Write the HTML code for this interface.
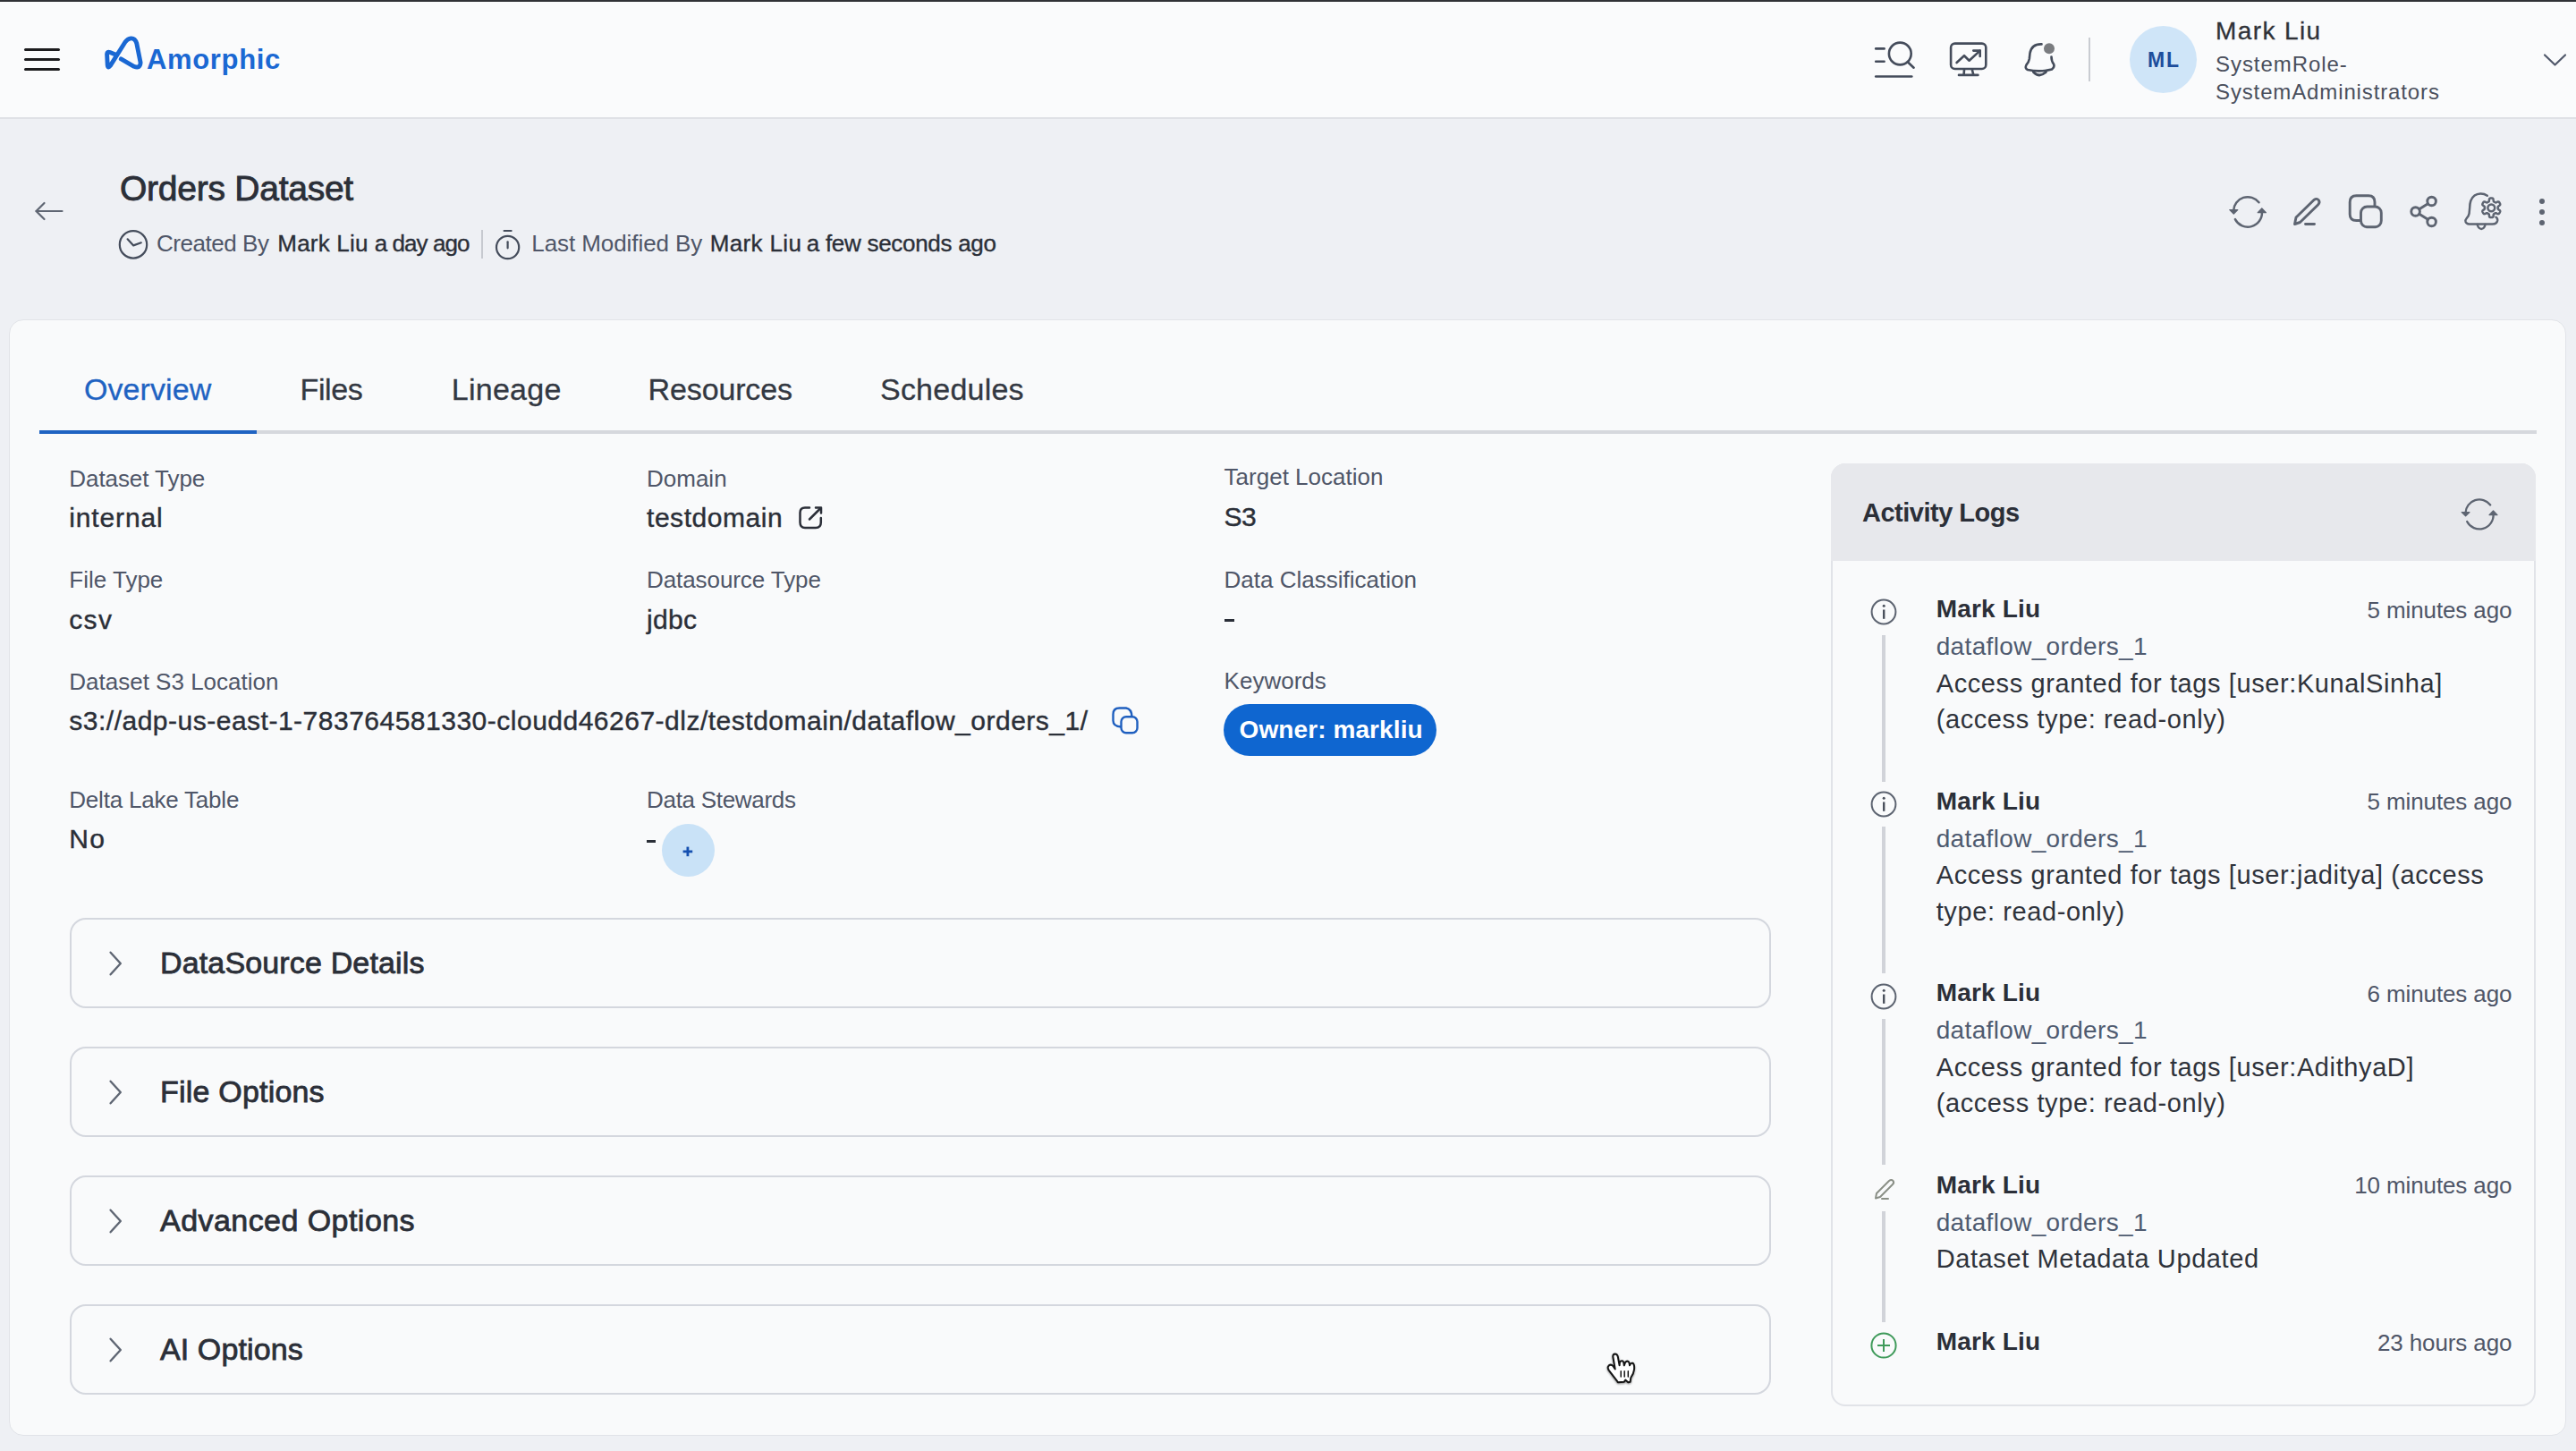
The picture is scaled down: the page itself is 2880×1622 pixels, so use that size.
<!DOCTYPE html>
<html><head><meta charset="utf-8"><style>
html,body{margin:0;padding:0;}
body{width:2880px;height:1622px;position:relative;overflow:hidden;background:#eef0f4;font-family:"Liberation Sans", sans-serif;}
.t{position:absolute;white-space:nowrap;line-height:1;}
svg{overflow:visible}
</style></head><body>
<div style="position:absolute;left:0px;top:0px;width:2880px;height:131px;background:#fafbfc;"></div>
<div style="position:absolute;left:0px;top:0px;width:2880px;height:2px;background:#303236;"></div>
<div style="position:absolute;left:0px;top:131px;width:2880px;height:2px;background:#dfe1e6;"></div>
<div style="position:absolute;left:26.5px;top:53.8px;width:40px;height:3.4px;background:#1c1c1e;border-radius:2px;"></div>
<div style="position:absolute;left:26.5px;top:64.8px;width:40px;height:3.4px;background:#1c1c1e;border-radius:2px;"></div>
<div style="position:absolute;left:26.5px;top:75.8px;width:40px;height:3.4px;background:#1c1c1e;border-radius:2px;"></div>
<svg style="position:absolute;left:110px;top:36px;" width="56" height="48" viewBox="110 36 56 48" fill="none"><path d="M135.3 65.9 L149.8 74.3 Q156.8 77 157.1 70 L152.8 48.5 Q151 42.6 146.4 42.9 Q142.6 43.2 139.8 47.2 L123.2 73.6 Q120.6 77 120.2 72.5 L119.6 60.5 Q119.8 57.3 123 58.6 L130.2 61.6" stroke="#1a68d3" stroke-width="4.9" stroke-linecap="round" stroke-linejoin="round"/></svg>
<div class="t" style="top:50.76px;font-size:31px;color:#1a68d3;left:164.00px;font-weight:bold;letter-spacing:0.65px;">Amorphic</div>
<svg style="position:absolute;left:2090px;top:40px;" width="56" height="52" viewBox="2090 40 56 52" fill="none"><g stroke="#444c5b" stroke-width="2.6" stroke-linecap="round">
<line x1="2097.2" y1="54.4" x2="2106.6" y2="54.4"/><line x1="2097.2" y1="68.7" x2="2106.6" y2="68.7"/>
<line x1="2097.2" y1="85.5" x2="2137.3" y2="85.5"/>
<circle cx="2124.3" cy="60" r="12.4"/><line x1="2133.6" y1="70" x2="2139.6" y2="75.7"/></g></svg>
<svg style="position:absolute;left:2175px;top:44px;" width="52" height="46" viewBox="2175 44 52 46" fill="none"><g stroke="#444c5b" stroke-width="2.6" stroke-linecap="round" stroke-linejoin="round">
<rect x="2181.1" y="48.6" width="39.2" height="28.4" rx="4.5"/>
<polyline points="2187.6,70 2196,62.2 2201.6,67.7 2213.7,56.6"/>
<polyline points="2206.3,56.6 2213.7,56.6 2213.7,63"/>
<line x1="2196" y1="78" x2="2195.6" y2="83.6"/><line x1="2204.9" y1="78" x2="2206.3" y2="83.6"/>
<line x1="2190" y1="83.9" x2="2211.4" y2="83.9"/></g></svg>
<svg style="position:absolute;left:2255px;top:40px;" width="52" height="52" viewBox="2255 40 52 52" fill="none"><g stroke="#444c5b" stroke-width="2.6" stroke-linecap="round" stroke-linejoin="round">
<path d="M2282.5 49.4 Q2271.5 49 2269.5 59.5 L2268.8 66 Q2268 70 2265.5 72.5 Q2263.5 76.5 2267 78 Q2280 81 2294 77.5 Q2297.5 75.5 2296 71.5 Q2293.5 68.5 2293.5 63.5"/>
<path d="M2273.3 80.5 Q2280 87.5 2287.5 80.5"/></g>
<circle cx="2291" cy="54.2" r="6" fill="#7a7c80"/></svg>
<div style="position:absolute;left:2334.5px;top:42px;width:2px;height:49px;background:#c9ccd2;"></div>
<div style="position:absolute;left:2381px;top:29px;width:75px;height:75px;background:#cfe5f8;border-radius:50%;"></div>
<div class="t" style="top:56.13px;font-size:23px;color:#1d4d9c;left:2401.00px;font-weight:bold;letter-spacing:1.84px;">ML</div>
<div class="t" style="top:21.30px;font-size:28px;color:#2f3238;left:2477.00px;letter-spacing:1.40px;-webkit-text-stroke:0.3px #2f3238;">Mark Liu</div>
<div class="t" style="top:59.68px;font-size:24px;color:#4a4f5c;left:2477.00px;letter-spacing:0.95px;">SystemRole-</div>
<div class="t" style="top:90.68px;font-size:24px;color:#4a4f5c;left:2477.00px;letter-spacing:0.87px;">SystemAdministrators</div>
<svg style="position:absolute;left:2840px;top:55px;" width="34" height="24" viewBox="2840 55 34 24" fill="none"><polyline points="2845,61.5 2856.5,72.5 2868,61.5" stroke="#50586a" stroke-width="2.2" stroke-linecap="round" stroke-linejoin="round"/></svg>
<svg style="position:absolute;left:36px;top:222px;" width="40" height="28" viewBox="36 222 40 28" fill="none"><g stroke="#5f6673" stroke-width="2.2" stroke-linecap="round" stroke-linejoin="round"><line x1="40.5" y1="236" x2="69.5" y2="236"/><polyline points="49.5,227 40.5,236 49.5,245"/></g></svg>
<div class="t" style="top:190.99px;font-size:39px;color:#2b2f38;left:134.00px;letter-spacing:-0.25px;-webkit-text-stroke:0.85px #2b2f38;">Orders Dataset</div>
<svg style="position:absolute;left:130px;top:254px;" width="38" height="38" viewBox="130 254 38 38" fill="none"><g stroke="#444c5b" stroke-width="2.2" stroke-linecap="round" stroke-linejoin="round"><circle cx="149" cy="273.4" r="15.2"/><polyline points="142.6,267.3 149.2,274.4 157.8,271.3"/></g></svg>
<div class="t" style="top:259.39px;font-size:26px;color:#4f5668;left:175.00px;letter-spacing:-0.45px;">Created By</div>
<div class="t" style="top:259.39px;font-size:26px;color:#2b2f38;left:310.30px;letter-spacing:0.21px;-webkit-text-stroke:0.35px #2b2f38;">Mark Liu</div>
<div class="t" style="top:259.39px;font-size:26px;color:#2b2f38;left:418.70px;letter-spacing:-0.93px;-webkit-text-stroke:0.35px #2b2f38;">a day ago</div>
<div style="position:absolute;left:537.5px;top:257.4px;width:2px;height:32px;background:#c6c9cf;"></div>
<svg style="position:absolute;left:550px;top:252px;" width="36" height="40" viewBox="550 252 36 40" fill="none"><g stroke="#444c5b" stroke-width="2.2" stroke-linecap="round"><circle cx="567.6" cy="276.5" r="12.6"/><line x1="563.6" y1="258" x2="571.6" y2="258"/><line x1="567.6" y1="270.3" x2="567.6" y2="277.3"/></g></svg>
<div class="t" style="top:259.39px;font-size:26px;color:#4f5668;left:594.30px;letter-spacing:-0.08px;">Last Modified By</div>
<div class="t" style="top:259.39px;font-size:26px;color:#2b2f38;left:793.80px;letter-spacing:0.34px;-webkit-text-stroke:0.35px #2b2f38;">Mark Liu</div>
<div class="t" style="top:259.39px;font-size:26px;color:#2b2f38;left:901.80px;letter-spacing:-0.29px;-webkit-text-stroke:0.35px #2b2f38;">a few seconds ago</div>
<svg style="position:absolute;left:2489.1px;top:214.2px;" width="48" height="44" viewBox="2489.1 214.2 48 44" fill="none"><g transform="translate(2513.1 236.2) scale(1.06)">
<path d="M-15 -0.5 A15 15 0 0 1 11.8 -9.2" stroke="#5d6471" stroke-width="2.3584905660377355" stroke-linecap="round" fill="none"/>
<path d="M-13.3 8.6 A15 15 0 0 0 15 0.8" stroke="#5d6471" stroke-width="2.3584905660377355" stroke-linecap="round" fill="none"/>
<polygon points="-19,-1.4 -10.6,-1.4 -14.8,2.8" fill="#5d6471" stroke="#5d6471" stroke-width="1.2" stroke-linejoin="round"/>
<polygon points="10.6,1.6 19.2,1.6 14.9,-3.0" fill="#5d6471" stroke="#5d6471" stroke-width="1.2" stroke-linejoin="round"/>
</g></svg>
<svg style="position:absolute;left:2558px;top:215px;" width="42" height="42" viewBox="2558 215 42 42" fill="none"><g stroke="#5d6471" stroke-width="2.9" stroke-linecap="round" stroke-linejoin="round">
<path d="M2565.5 250.5 L2567 243 L2587 223.5 Q2590.5 221 2592.5 224 Q2594 226.5 2591.5 229 L2571.5 248.5 Z"/>
<line x1="2577.5" y1="250.5" x2="2587.5" y2="250.5"/></g></svg>
<svg style="position:absolute;left:2620px;top:212px;" width="50" height="48" viewBox="2620 212 50 48" fill="none"><g stroke="#5d6471" stroke-width="2.9" stroke-linejoin="round">
<path d="M2655 231 L2655 226 Q2655 218.8 2648 218.8 L2634.5 218.8 Q2627.2 218.8 2627.2 226 L2627.2 239.5 Q2627.2 246.5 2634.5 246.5 L2639.5 246.5"/>
<rect x="2639.5" y="231" width="22.8" height="22.8" rx="7"/></g></svg>
<svg style="position:absolute;left:2690px;top:214px;" width="40" height="44" viewBox="2690 214 40 44" fill="none"><g stroke="#5d6471" stroke-width="2.9" stroke-linecap="round">
<circle cx="2718.6" cy="225" r="4.8"/><circle cx="2700.6" cy="236.5" r="4.8"/><circle cx="2718.6" cy="248" r="4.8"/>
<line x1="2704.8" y1="233.8" x2="2714.4" y2="227.7"/><line x1="2704.8" y1="239.2" x2="2714.4" y2="245.3"/></g></svg>
<svg style="position:absolute;left:2750px;top:210px;" width="54" height="52" viewBox="2750 210 54 52" fill="none"><g stroke="#5d6471" stroke-width="2.5" stroke-linecap="round" stroke-linejoin="round" fill="none">
<path d="M2780.8 218.8 Q2777.5 216.5 2773.1 216.6 Q2765.5 216.8 2762.3 224.5 Q2761.3 227.5 2761.2 232 L2760.6 238.5 Q2760 242 2757.7 244 Q2755.8 246 2756.6 248 Q2757.6 250.3 2760.5 250.4 L2786.6 250.5 Q2791.5 250.4 2792.2 246.5 Q2792.5 244 2790.5 242.7"/>
<path d="M2769.6 251 Q2771 255.8 2774.2 255.9 Q2777.4 255.8 2778.6 251"/>
<path d="M2785.30,221.50 L2785.68,221.51 L2786.05,221.54 L2786.43,221.60 L2786.79,221.70 L2787.13,221.90 L2787.42,222.31 L2787.61,223.04 L2787.69,223.98 L2787.77,224.71 L2787.91,225.12 L2788.11,225.35 L2788.32,225.51 L2788.55,225.64 L2788.78,225.76 L2789.00,225.89 L2789.22,226.02 L2789.44,226.15 L2789.67,226.28 L2789.91,226.39 L2790.21,226.45 L2790.64,226.37 L2791.32,226.07 L2792.16,225.67 L2792.89,225.46 L2793.39,225.51 L2793.74,225.71 L2794.01,225.97 L2794.24,226.27 L2794.46,226.58 L2794.65,226.90 L2794.83,227.23 L2795.00,227.57 L2795.13,227.92 L2795.23,228.29 L2795.22,228.69 L2795.02,229.14 L2794.47,229.67 L2793.70,230.21 L2793.11,230.64 L2792.82,230.97 L2792.72,231.26 L2792.70,231.52 L2792.69,231.78 L2792.70,232.04 L2792.70,232.30 L2792.70,232.56 L2792.69,232.82 L2792.70,233.08 L2792.72,233.34 L2792.82,233.63 L2793.11,233.96 L2793.70,234.39 L2794.47,234.93 L2795.02,235.46 L2795.22,235.91 L2795.23,236.31 L2795.13,236.68 L2795.00,237.03 L2794.83,237.37 L2794.65,237.70 L2794.46,238.02 L2794.24,238.33 L2794.01,238.63 L2793.74,238.89 L2793.39,239.09 L2792.89,239.14 L2792.16,238.93 L2791.32,238.53 L2790.64,238.23 L2790.21,238.15 L2789.91,238.21 L2789.67,238.32 L2789.44,238.45 L2789.22,238.58 L2789.00,238.71 L2788.78,238.84 L2788.55,238.96 L2788.32,239.09 L2788.11,239.25 L2787.91,239.48 L2787.77,239.89 L2787.69,240.62 L2787.61,241.56 L2787.42,242.29 L2787.13,242.70 L2786.79,242.90 L2786.43,243.00 L2786.05,243.06 L2785.68,243.09 L2785.30,243.10 L2784.92,243.09 L2784.55,243.06 L2784.17,243.00 L2783.81,242.90 L2783.47,242.70 L2783.18,242.29 L2782.99,241.56 L2782.91,240.62 L2782.83,239.89 L2782.69,239.48 L2782.49,239.25 L2782.28,239.09 L2782.05,238.96 L2781.82,238.84 L2781.60,238.71 L2781.38,238.58 L2781.16,238.45 L2780.93,238.32 L2780.69,238.21 L2780.39,238.15 L2779.96,238.23 L2779.28,238.53 L2778.44,238.93 L2777.71,239.14 L2777.21,239.09 L2776.86,238.89 L2776.59,238.63 L2776.36,238.33 L2776.14,238.02 L2775.95,237.70 L2775.77,237.37 L2775.60,237.03 L2775.47,236.68 L2775.37,236.31 L2775.38,235.91 L2775.58,235.46 L2776.13,234.93 L2776.90,234.39 L2777.49,233.96 L2777.78,233.63 L2777.88,233.34 L2777.90,233.08 L2777.91,232.82 L2777.90,232.56 L2777.90,232.30 L2777.90,232.04 L2777.91,231.78 L2777.90,231.52 L2777.88,231.26 L2777.78,230.97 L2777.49,230.64 L2776.90,230.21 L2776.13,229.67 L2775.58,229.14 L2775.38,228.69 L2775.37,228.29 L2775.47,227.92 L2775.60,227.57 L2775.77,227.23 L2775.95,226.90 L2776.14,226.58 L2776.36,226.27 L2776.59,225.97 L2776.86,225.71 L2777.21,225.51 L2777.71,225.46 L2778.44,225.67 L2779.28,226.07 L2779.96,226.37 L2780.39,226.45 L2780.69,226.39 L2780.93,226.28 L2781.16,226.15 L2781.38,226.02 L2781.60,225.89 L2781.82,225.76 L2782.05,225.64 L2782.28,225.51 L2782.49,225.35 L2782.69,225.12 L2782.83,224.71 L2782.91,223.98 L2782.99,223.04 L2783.18,222.31 L2783.47,221.90 L2783.81,221.70 L2784.17,221.60 L2784.55,221.54 L2784.92,221.51 Z"/>
<circle cx="2785.3" cy="232.3" r="3.9"/></g></svg>
<div style="position:absolute;left:2839.2px;top:222.3px;width:6px;height:6px;background:#5d6471;border-radius:50%;"></div>
<div style="position:absolute;left:2839.2px;top:234.2px;width:6px;height:6px;background:#5d6471;border-radius:50%;"></div>
<div style="position:absolute;left:2839.2px;top:246.2px;width:6px;height:6px;background:#5d6471;border-radius:50%;"></div>
<div style="position:absolute;left:10px;top:357px;width:2859px;height:1248px;background:#f9fafb;border:1.5px solid #e1e3e8;border-radius:16px;box-sizing:border-box;"></div>
<div style="position:absolute;left:44px;top:481px;width:2792px;height:4px;background:#d6d8dd;"></div>
<div style="position:absolute;left:44px;top:481px;width:243px;height:4px;background:#1f63c2;"></div>
<div class="t" style="top:418.02px;font-size:34px;color:#1f63c2;left:94.00px;letter-spacing:0.07px;-webkit-text-stroke:0.3px #1f63c2;">Overview</div>
<div class="t" style="top:418.02px;font-size:34px;color:#333842;left:335.50px;letter-spacing:-0.37px;-webkit-text-stroke:0.3px #333842;">Files</div>
<div class="t" style="top:418.02px;font-size:34px;color:#333842;left:504.70px;letter-spacing:0.28px;-webkit-text-stroke:0.3px #333842;">Lineage</div>
<div class="t" style="top:418.02px;font-size:34px;color:#333842;left:724.60px;letter-spacing:-0.14px;-webkit-text-stroke:0.3px #333842;">Resources</div>
<div class="t" style="top:418.02px;font-size:34px;color:#333842;left:984.00px;letter-spacing:0.22px;-webkit-text-stroke:0.3px #333842;">Schedules</div>
<div class="t" style="top:521.99px;font-size:26px;color:#4f5668;left:77.30px;letter-spacing:-0.07px;">Dataset Type</div>
<div class="t" style="top:564.11px;font-size:30px;color:#2b2f38;left:77.30px;letter-spacing:0.85px;-webkit-text-stroke:0.4px #2b2f38;">internal</div>
<div class="t" style="top:521.99px;font-size:26px;color:#4f5668;left:723.00px;">Domain</div>
<div class="t" style="top:564.11px;font-size:30px;color:#2b2f38;left:723.00px;letter-spacing:0.55px;-webkit-text-stroke:0.4px #2b2f38;">testdomain</div>
<svg style="position:absolute;left:888px;top:560px;" width="36" height="36" viewBox="888 560 36 36" fill="none"><g stroke="#2b2f38" stroke-width="2.5" stroke-linecap="round" stroke-linejoin="round">
<path d="M905 567.5 L900 567.5 Q894.5 567.5 894.5 573 L894.5 584 Q894.5 590 900 590 L912 590 Q917.8 590 917.8 584 L917.8 579"/>
<polyline points="912,567.5 918,567.5 918,573.5"/><line x1="917" y1="568.5" x2="905" y2="580.5"/></g></svg>
<div class="t" style="top:520.39px;font-size:26px;color:#4f5668;left:1368.60px;">Target Location</div>
<div class="t" style="top:562.61px;font-size:30px;color:#2b2f38;left:1368.60px;letter-spacing:-0.60px;-webkit-text-stroke:0.4px #2b2f38;">S3</div>
<div class="t" style="top:634.99px;font-size:26px;color:#4f5668;left:77.30px;">File Type</div>
<div class="t" style="top:677.61px;font-size:30px;color:#2b2f38;left:77.30px;letter-spacing:1.30px;-webkit-text-stroke:0.4px #2b2f38;">csv</div>
<div class="t" style="top:634.99px;font-size:26px;color:#4f5668;left:723.00px;letter-spacing:-0.08px;">Datasource Type</div>
<div class="t" style="top:677.61px;font-size:30px;color:#2b2f38;left:723.00px;letter-spacing:0.32px;-webkit-text-stroke:0.4px #2b2f38;">jdbc</div>
<div class="t" style="top:634.59px;font-size:26px;color:#4f5668;left:1368.60px;">Data Classification</div>
<div style="position:absolute;left:1368.6px;top:692px;width:11px;height:2.6px;background:#2b2f38;"></div>
<div class="t" style="top:748.99px;font-size:26px;color:#4f5668;left:77.30px;">Dataset S3 Location</div>
<div class="t" style="top:791.40px;font-size:30px;color:#2b2f38;left:77.30px;letter-spacing:0.50px;-webkit-text-stroke:0.4px #2b2f38;">s3://adp-us-east-1-783764581330-cloudd46267-dlz/testdomain/dataflow_orders_1/</div>
<svg style="position:absolute;left:1238px;top:786px;" width="40" height="40" viewBox="1238 786 40 40" fill="none"><g stroke="#1f5fbf" stroke-width="2.4" stroke-linejoin="round">
<path d="M1265.5 801.5 Q1265.3 792.5 1259 791.5 L1251.5 791.5 Q1244.5 791.5 1244.5 798.5 L1244.5 805.5 Q1244.5 812 1253.5 812.5"/>
<rect x="1253.5" y="801.2" width="18" height="18" rx="5.5"/></g></svg>
<div class="t" style="top:748.49px;font-size:26px;color:#4f5668;left:1368.60px;">Keywords</div>
<div style="position:absolute;left:1368px;top:786.6px;width:238.4px;height:58.6px;background:#0f66d0;border-radius:30px;"></div>
<div class="t" style="top:802.30px;font-size:28px;color:#ffffff;left:1385.50px;font-weight:bold;letter-spacing:0.10px;">Owner: markliu</div>
<div class="t" style="top:880.99px;font-size:26px;color:#4f5668;left:77.30px;letter-spacing:-0.21px;">Delta Lake Table</div>
<div class="t" style="top:923.00px;font-size:30px;color:#2b2f38;left:77.30px;letter-spacing:1.30px;-webkit-text-stroke:0.4px #2b2f38;">No</div>
<div class="t" style="top:880.99px;font-size:26px;color:#4f5668;left:723.00px;letter-spacing:-0.29px;">Data Stewards</div>
<div style="position:absolute;left:723px;top:939px;width:10px;height:2.6px;background:#2b2f38;"></div>
<div style="position:absolute;left:739.5px;top:921.2px;width:59px;height:59px;background:#c9e2f7;border-radius:50%;"></div>
<svg style="position:absolute;left:758px;top:941px;" width="22" height="22" viewBox="758 941 22 22" fill="none"><g stroke="#1550b0" stroke-width="2.8"><line x1="768.9" y1="946.6" x2="768.9" y2="957.2"/><line x1="763.6" y1="951.9" x2="774.2" y2="951.9"/></g></svg>
<div style="position:absolute;left:78px;top:1025.7px;width:1902px;height:101px;background:#f9fafb;border:2px solid #d4d7de;border-radius:18px;box-sizing:border-box;"></div>
<svg style="position:absolute;left:118px;top:1060.5px;" width="24" height="32" viewBox="118 1060.5 24 32" fill="none"><polyline points="123.6,1064.2 134.8,1076.5 123.6,1088.8" stroke="#5f6673" stroke-width="2.4" stroke-linecap="round" stroke-linejoin="round"/></svg>
<div class="t" style="top:1059.12px;font-size:34px;color:#2b2f38;left:179.00px;letter-spacing:0.15px;-webkit-text-stroke:0.8px #2b2f38;">DataSource Details</div>
<div style="position:absolute;left:78px;top:1169.7px;width:1902px;height:101px;background:#f9fafb;border:2px solid #d4d7de;border-radius:18px;box-sizing:border-box;"></div>
<svg style="position:absolute;left:118px;top:1204.5px;" width="24" height="32" viewBox="118 1204.5 24 32" fill="none"><polyline points="123.6,1208.2 134.8,1220.5 123.6,1232.8" stroke="#5f6673" stroke-width="2.4" stroke-linecap="round" stroke-linejoin="round"/></svg>
<div class="t" style="top:1203.12px;font-size:34px;color:#2b2f38;left:179.00px;letter-spacing:0.20px;-webkit-text-stroke:0.8px #2b2f38;">File Options</div>
<div style="position:absolute;left:78px;top:1313.7px;width:1902px;height:101px;background:#f9fafb;border:2px solid #d4d7de;border-radius:18px;box-sizing:border-box;"></div>
<svg style="position:absolute;left:118px;top:1348.5px;" width="24" height="32" viewBox="118 1348.5 24 32" fill="none"><polyline points="123.6,1352.2 134.8,1364.5 123.6,1376.8" stroke="#5f6673" stroke-width="2.4" stroke-linecap="round" stroke-linejoin="round"/></svg>
<div class="t" style="top:1347.12px;font-size:34px;color:#2b2f38;left:179.00px;letter-spacing:0.45px;-webkit-text-stroke:0.8px #2b2f38;">Advanced Options</div>
<div style="position:absolute;left:78px;top:1457.7px;width:1902px;height:101px;background:#f9fafb;border:2px solid #d4d7de;border-radius:18px;box-sizing:border-box;"></div>
<svg style="position:absolute;left:118px;top:1492.5px;" width="24" height="32" viewBox="118 1492.5 24 32" fill="none"><polyline points="123.6,1496.2 134.8,1508.5 123.6,1520.8" stroke="#5f6673" stroke-width="2.4" stroke-linecap="round" stroke-linejoin="round"/></svg>
<div class="t" style="top:1491.12px;font-size:34px;color:#2b2f38;left:179.00px;letter-spacing:0.10px;-webkit-text-stroke:0.8px #2b2f38;">AI Options</div>
<div style="position:absolute;left:2047px;top:518px;width:788px;height:1053.5px;background:#f9fafb;border:2px solid #e1e3e8;border-radius:16px;box-sizing:border-box;overflow:hidden;"></div>
<div style="position:absolute;left:2047px;top:518px;width:788px;height:109px;background:#e7e8ec;border-radius:16px 16px 0 0;"></div>
<div class="t" style="top:559.15px;font-size:29px;color:#2b2f38;left:2082.00px;font-weight:bold;letter-spacing:-0.50px;">Activity Logs</div>
<svg style="position:absolute;left:2748.2px;top:551.6px;" width="48" height="44" viewBox="2748.2 551.6 48 44" fill="none"><g transform="translate(2772.2 573.6) scale(1.04)">
<path d="M-15 -0.5 A15 15 0 0 1 11.8 -9.2" stroke="#5d6471" stroke-width="2.2115384615384612" stroke-linecap="round" fill="none"/>
<path d="M-13.3 8.6 A15 15 0 0 0 15 0.8" stroke="#5d6471" stroke-width="2.2115384615384612" stroke-linecap="round" fill="none"/>
<polygon points="-19,-1.4 -10.6,-1.4 -14.8,2.8" fill="#5d6471" stroke="#5d6471" stroke-width="1.2" stroke-linejoin="round"/>
<polygon points="10.6,1.6 19.2,1.6 14.9,-3.0" fill="#5d6471" stroke="#5d6471" stroke-width="1.2" stroke-linejoin="round"/>
</g></svg>
<svg style="position:absolute;left:2088px;top:666.4px;" width="36" height="36" viewBox="2088 666.4 36 36" fill="none"><g stroke="#5d6471" stroke-width="2"><circle cx="2106" cy="684.4" r="13.4"/></g><line x1="2106.2" y1="681.9" x2="2106.2" y2="692.1999999999999" stroke="#4a505c" stroke-width="2.4"/><circle cx="2106.2" cy="677.6" r="1.5" fill="#4a505c"/></svg>
<div style="position:absolute;left:2104px;top:709.5px;width:4px;height:164.5px;background:#d1d3d9;"></div>
<div class="t" style="top:667.10px;font-size:28px;color:#2b2f38;left:2164.70px;font-weight:bold;letter-spacing:0.18px;">Mark Liu</div>
<div class="t" style="top:668.79px;font-size:26px;color:#4f5668;right:71.60px;text-align:right;letter-spacing:-0.11px;">5 minutes ago</div>
<div class="t" style="top:709.10px;font-size:28px;color:#4f5b70;left:2164.70px;letter-spacing:0.34px;">dataflow_orders_1</div>
<div class="t" style="top:749.65px;font-size:29px;color:#2f333b;left:2164.70px;letter-spacing:0.60px;">Access granted for tags [user:KunalSinha]</div>
<div class="t" style="top:790.25px;font-size:29px;color:#2f333b;left:2164.70px;letter-spacing:0.60px;">(access type: read-only)</div>
<svg style="position:absolute;left:2088px;top:881px;" width="36" height="36" viewBox="2088 881 36 36" fill="none"><g stroke="#5d6471" stroke-width="2"><circle cx="2106" cy="899" r="13.4"/></g><line x1="2106.2" y1="896.5" x2="2106.2" y2="906.8" stroke="#4a505c" stroke-width="2.4"/><circle cx="2106.2" cy="892.2" r="1.5" fill="#4a505c"/></svg>
<div style="position:absolute;left:2104px;top:924px;width:4px;height:164px;background:#d1d3d9;"></div>
<div class="t" style="top:881.70px;font-size:28px;color:#2b2f38;left:2164.70px;font-weight:bold;letter-spacing:0.18px;">Mark Liu</div>
<div class="t" style="top:883.39px;font-size:26px;color:#4f5668;right:71.60px;text-align:right;letter-spacing:-0.11px;">5 minutes ago</div>
<div class="t" style="top:923.70px;font-size:28px;color:#4f5b70;left:2164.70px;letter-spacing:0.34px;">dataflow_orders_1</div>
<div class="t" style="top:964.25px;font-size:29px;color:#2f333b;left:2164.70px;letter-spacing:0.60px;">Access granted for tags [user:jaditya] (access</div>
<div class="t" style="top:1004.85px;font-size:29px;color:#2f333b;left:2164.70px;letter-spacing:0.60px;">type: read-only)</div>
<svg style="position:absolute;left:2088px;top:1095.6px;" width="36" height="36" viewBox="2088 1095.6 36 36" fill="none"><g stroke="#5d6471" stroke-width="2"><circle cx="2106" cy="1113.6" r="13.4"/></g><line x1="2106.2" y1="1111.1" x2="2106.2" y2="1121.3999999999999" stroke="#4a505c" stroke-width="2.4"/><circle cx="2106.2" cy="1106.8" r="1.5" fill="#4a505c"/></svg>
<div style="position:absolute;left:2104px;top:1139px;width:4px;height:163px;background:#d1d3d9;"></div>
<div class="t" style="top:1096.30px;font-size:28px;color:#2b2f38;left:2164.70px;font-weight:bold;letter-spacing:0.18px;">Mark Liu</div>
<div class="t" style="top:1097.99px;font-size:26px;color:#4f5668;right:71.60px;text-align:right;letter-spacing:-0.11px;">6 minutes ago</div>
<div class="t" style="top:1138.30px;font-size:28px;color:#4f5b70;left:2164.70px;letter-spacing:0.34px;">dataflow_orders_1</div>
<div class="t" style="top:1178.85px;font-size:29px;color:#2f333b;left:2164.70px;letter-spacing:0.60px;">Access granted for tags [user:AdithyaD]</div>
<div class="t" style="top:1219.45px;font-size:29px;color:#2f333b;left:2164.70px;letter-spacing:0.60px;">(access type: read-only)</div>
<svg style="position:absolute;left:2090px;top:1312px;" width="34" height="34" viewBox="2090 1312 34 34" fill="none"><g stroke="#8a8f86" stroke-width="2" stroke-linecap="round" stroke-linejoin="round"><path d="M2097 1339.5 L2098 1334 L2112 1320 Q2114.5 1318 2116.5 1320 Q2118 1322 2116 1324 L2102 1338 Z"/><line x1="2104" y1="1340" x2="2111" y2="1340"/></g></svg>
<div style="position:absolute;left:2104px;top:1353.7px;width:4px;height:124.29999999999995px;background:#d1d3d9;"></div>
<div class="t" style="top:1310.70px;font-size:28px;color:#2b2f38;left:2164.70px;font-weight:bold;letter-spacing:0.18px;">Mark Liu</div>
<div class="t" style="top:1312.39px;font-size:26px;color:#4f5668;right:71.60px;text-align:right;letter-spacing:-0.11px;">10 minutes ago</div>
<div class="t" style="top:1352.70px;font-size:28px;color:#4f5b70;left:2164.70px;letter-spacing:0.34px;">dataflow_orders_1</div>
<div class="t" style="top:1393.25px;font-size:29px;color:#2f333b;left:2164.70px;letter-spacing:0.60px;">Dataset Metadata Updated</div>
<svg style="position:absolute;left:2088px;top:1485.7px;" width="36" height="36" viewBox="2088 1485.7 36 36" fill="none"><g stroke="#3f9a5a" stroke-width="2"><circle cx="2106" cy="1503.7" r="13.6"/><line x1="2106" y1="1496.7" x2="2106" y2="1510.7"/><line x1="2099" y1="1503.7" x2="2113" y2="1503.7"/></g></svg>
<div class="t" style="top:1486.40px;font-size:28px;color:#2b2f38;left:2164.70px;font-weight:bold;letter-spacing:0.18px;">Mark Liu</div>
<div class="t" style="top:1488.09px;font-size:26px;color:#4f5668;right:71.60px;text-align:right;letter-spacing:-0.11px;">23 hours ago</div>
<svg style="position:absolute;left:1790px;top:1505px;" width="44" height="48" viewBox="1790 1505 44 48" fill="none"><path d="M1805.7 1530.4 L1803.3 1516.5 Q1803.3 1513.6 1805.6 1513.6 Q1808.1 1513.7 1808.8 1516.6 L1810.6 1526.3 L1810.9 1522.8 Q1812.3 1520.6 1814.3 1521.5 Q1815.4 1522.2 1815.8 1526.3 L1817.1 1522.8 Q1818.8 1520.8 1820.7 1522.1 Q1821.6 1523 1822 1526.3 L1823.2 1524.3 Q1825.6 1522.6 1826.7 1525.6 Q1827.4 1527.5 1827 1531 Q1826.5 1535.5 1823.3 1540 L1822.6 1544.8 L1820.3 1545.3 L1817.2 1542.6 L1815.8 1544.8 L1808.8 1545.3 L1807.8 1543.6 L1798.6 1531.6 Q1796.6 1528.4 1798.8 1526.4 Q1801.2 1524.6 1803.2 1526.8 Z" fill="#ffffff" stroke="#141414" stroke-width="2" stroke-linejoin="round" style="filter:drop-shadow(0.6px 1px 0.8px rgba(0,0,0,0.45))"/>
<g stroke="#141414" stroke-width="1.5" stroke-linecap="round"><line x1="1812.2" y1="1532.8" x2="1812.2" y2="1539"/><line x1="1816.2" y1="1532.8" x2="1816.2" y2="1539"/><line x1="1820.3" y1="1532.8" x2="1820.3" y2="1539"/></g></svg>
</body></html>
